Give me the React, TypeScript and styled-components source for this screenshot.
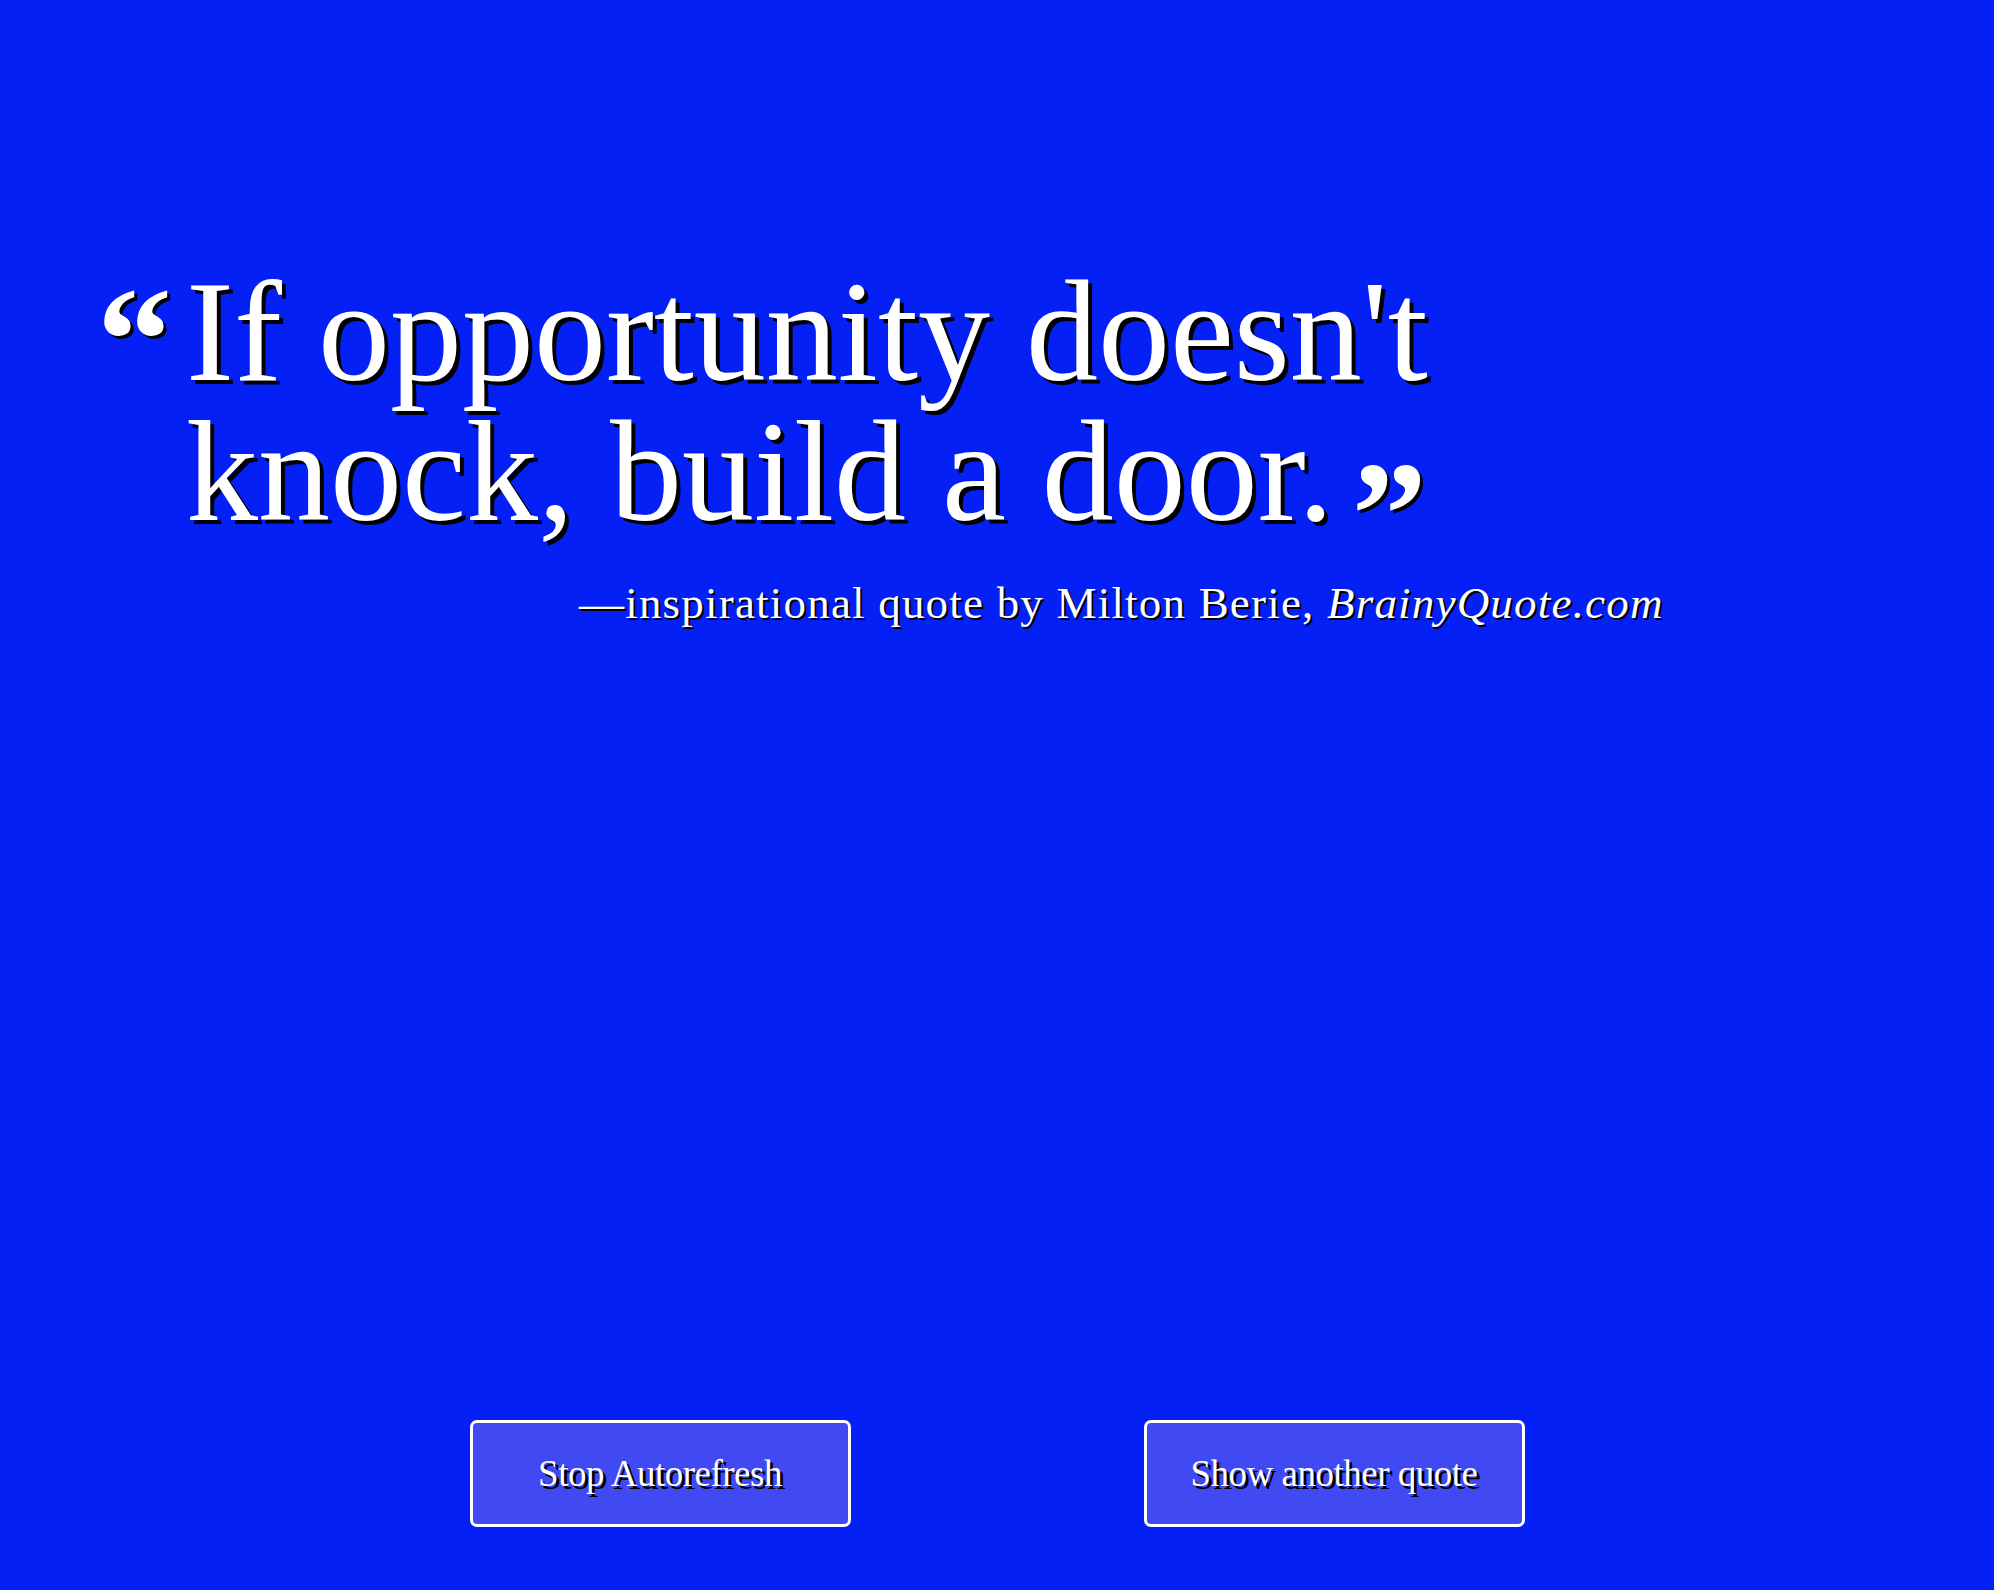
import React from "react";
import styled, { createGlobalStyle } from "styled-components";

const GlobalStyle = createGlobalStyle`
  html, body {
    margin: 0;
    padding: 0;
    background: #0420f4;
  }
  body {
    font-family: "Liberation Serif", "DejaVu Serif", serif;
  }
`;

const Page = styled.main`
  min-height: 1590px;
  box-sizing: border-box;
  display: flex;
  flex-direction: column;
  background: #0420f4;
  color: #ffffff;
  padding: 262px 0 63px;
`;

const QuoteRow = styled.blockquote`
  display: flex;
  margin: 0;
  padding-left: 99px;
`;

const Mark = styled.span<{ $closing?: boolean }>`
  font-family: "Liberation Serif", serif;
  font-weight: 700;
  font-size: 150px;
  line-height: 0;
  text-shadow: 3px 3px 0 #000;
  ${({ $closing }) =>
    $closing
      ? `
    vertical-align: -0.3em;
    margin-left: 18px;
  `
      : `
    width: 89px;
    flex: none;
    padding-top: 78px;
    margin-left: -2px;
  `}
`;

const QuoteText = styled.p`
  margin: 0;
  max-width: 1270px;
  font-size: 144px;
  line-height: 140px;
  text-shadow: 4px 4px 0 #000;
`;

const Attribution = styled.p`
  margin: 36px 0 0 579px;
  font-size: 45px;
  line-height: 50px;
  letter-spacing: 1.2px;
  text-shadow: 2px 2px 0 #000;
`;

const Source = styled.em`
  font-style: italic;
`;

const ButtonBar = styled.div`
  margin-top: auto;
  display: flex;
  justify-content: center;
  gap: 293px;
`;

const Button = styled.button`
  width: 381px;
  height: 107px;
  box-sizing: border-box;
  background: #4149f2;
  border: 3px solid #ffffff;
  border-radius: 7px;
  color: #ffffff;
  font-family: "Liberation Serif", serif;
  font-size: 37px;
  letter-spacing: -0.5px;
  text-shadow: 3px 3px 0 #000;
  cursor: pointer;
`;

export default function App() {
  return (
    <>
      <GlobalStyle />
      <Page>
        <QuoteRow>
          <Mark>“</Mark>
          <QuoteText>
            If opportunity doesn't knock, build a door.
            <Mark $closing>”</Mark>
          </QuoteText>
        </QuoteRow>
        <Attribution>
          —inspirational quote by Milton Berie, <Source>BrainyQuote.com</Source>
        </Attribution>
        <ButtonBar>
          <Button>Stop Autorefresh</Button>
          <Button>Show another quote</Button>
        </ButtonBar>
      </Page>
    </>
  );
}
